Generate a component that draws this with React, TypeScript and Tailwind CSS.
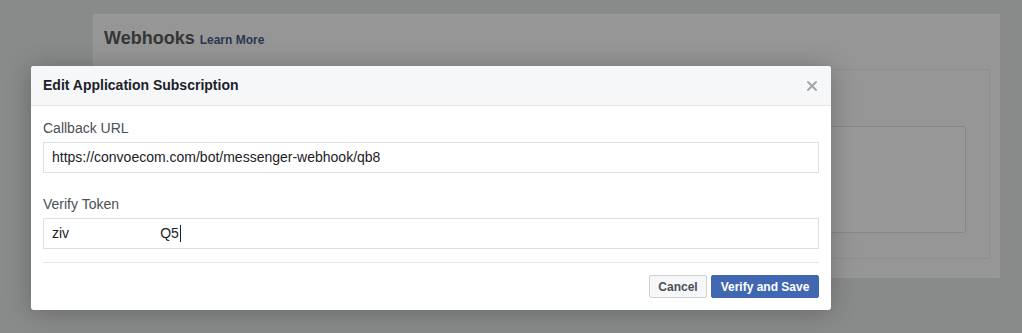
export default function App() {
  return (
    <div className="relative h-[333px] w-[1022px] overflow-hidden bg-[#898b8a]" style={{ fontFamily: '"Liberation Sans", Arial, sans-serif' }}>
      <div className="ml-[93px] mt-[14px] flex h-[264px] w-[907px] flex-col border border-[#979897] bg-[#959695] pb-[18px] pl-[10px] pr-[9px]">
        <div className="mt-[12px] flex items-baseline gap-[5px]">
          <span className="text-[18px] font-bold leading-[22px] text-[#343636]">Webhooks</span>
          <span className="text-[12px] font-bold text-[#2d3650]">Learn More</span>
        </div>
        <div className="mt-[20px] flex flex-1 flex-col rounded-[2px] border border-[#8d8e8d] pt-[56px] pr-[23px] pb-[25px]">
          <div className="ml-[60px] flex-1 rounded-[3px] border border-[#858685] bg-[#979897]" />
        </div>
      </div>

      <div className="absolute left-[31px] top-[66px] flex h-[244px] w-[800px] flex-col overflow-hidden rounded-[3px] bg-white shadow-[0_2px_26px_rgba(0,0,0,0.25)]">
        <div className="flex h-[40px] items-center justify-between border-b border-[#e5e5e5] bg-[#f6f7f9] pl-[12px] pr-[12px]">
          <span className="text-[14px] font-bold text-[#1d2129]">Edit Application Subscription</span>
          <svg width="12" height="12" viewBox="0 0 12 12" className="mr-[1px]">
            <path d="M2 2 L10 10 M10 2 L2 10" stroke="#a4a7ac" strokeWidth="2" strokeLinecap="round" />
          </svg>
        </div>
        <div className="flex flex-1 flex-col px-[12px] pt-[13px]">
          <label className="h-[18px] text-[14px] leading-[18px] text-[#4b4f56]">Callback URL</label>
          <div className="mt-[5px] flex h-[31px] items-center border border-[#dddfe2] pl-[8px] text-[14px] text-[#1d2129]">
            https://convoecom.com/bot/messenger-webhook/qb8
          </div>
          <label className="mt-[22px] h-[18px] text-[14px] leading-[18px] text-[#4b4f56]">Verify Token</label>
          <div className="mt-[5px] flex h-[31px] items-center border border-[#dddfe2] pl-[8px] text-[14px] text-[#1d2129]">
            <span className="whitespace-nowrap">ziv</span>
            <span className="ml-[91px]">Q5</span>
            <span className="ml-[1px] h-[17px] w-[1px] bg-[#1d2129]" />
          </div>
          <div className="mt-[13px] border-t border-[#e5e5e5]" />
          <div className="mt-[12px] flex justify-end gap-[4px]">
            <button className="h-[23px] w-[58px] rounded-[2px] border border-[#ced0d4] bg-[#f6f7f9] text-[12px] font-bold text-[#4b4f56]">Cancel</button>
            <button className="h-[23px] w-[108px] rounded-[2px] border border-[#4267b2] bg-[#4267b2] text-[12px] font-bold text-white">Verify and Save</button>
          </div>
        </div>
      </div>
    </div>
  );
}
